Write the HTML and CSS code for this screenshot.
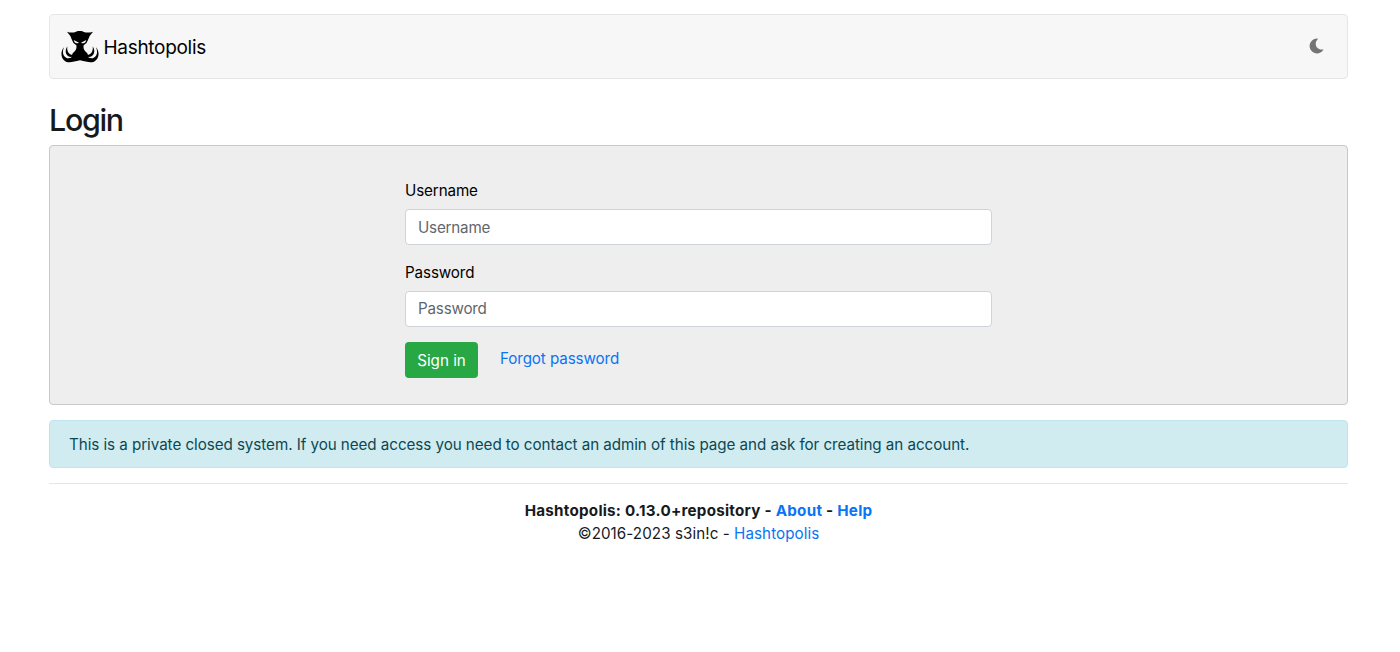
FILE: index.html
```html
<!DOCTYPE html>
<html lang="en">
<head>
<meta charset="utf-8">
<title>Hashtopolis</title>
<link rel="stylesheet" href="styles.css">
</head>
<body>
<div class="container">
  <nav class="navbar">
    <a class="brand" href="#">
      <svg class="logo" viewBox="9 13 114 96" aria-hidden="true">
        <path d="M27 15 Q42 20 54 15 Q65 10 76 15 Q88 20 105 15 Q94 26 90 40 Q87 51 77 56 C75 66 79 72 88 80 L92 92 Q88 103 66 98 Q44 103 40 92 L44 80 C53 72 57 66 55 56 Q45 51 42 40 Q38 26 27 15Z"/>
        <path d="M18 62 C6 76 8 97 24 105 C36 110 47 105 66 101 C85 105 96 110 108 105 C124 97 126 76 114 62 C121 78 116 91 106 94 C99 96 92 94 86 89 L46 89 C40 94 33 96 26 94 C16 91 11 78 18 62Z"/>
        <path d="M28 59 C18 74 24 91 40 91 L50 84 C37 89 25 77 28 59Z M104 59 C114 74 108 91 92 91 L82 84 C95 89 107 77 104 59Z"/>
        <path class="eyes" d="M47 40 L63 48 Q51 54 47 40Z M85 40 L69 48 Q81 54 85 40Z"/>
      </svg>
      <span>Hashtopolis</span>
    </a>
    <svg class="moon" viewBox="0 0 16 16" aria-hidden="true"><path d="M8.600 .1 A7.900 7.900 0 1 0 15.200 12.200 Q15.400 11.600 14.700 11.700 C8.300 12.700 4.600 5.500 9.200 1 Q9.900 .2 8.600 .1Z"/></svg>
  </nav>
  <h2>Login</h2>
  <main class="panel">
    <form class="login">
      <label for="username">Username</label>
      <input id="username" type="text" placeholder="Username">
      <label for="password">Password</label>
      <input id="password" type="password" placeholder="Password">
      <div class="actions">
        <button type="button">Sign in</button>
        <a href="#">Forgot password</a>
      </div>
    </form>
  </main>
  <div class="alert">This is a private closed system. If you need access you need to contact an admin of this page and ask for creating an account.</div>
  <footer>
    <div class="version">Hashtopolis: 0.13.0+repository - <a href="#">About</a> - <a href="#">Help</a></div>
    <div class="copyright">©2016-2023 s3in!c - <a href="#">Hashtopolis</a></div>
  </footer>
</div>
</body>
</html>
```
FILE: styles.css
```css
* { box-sizing: border-box; }
body {
  margin: 0;
  background: #fff;
  color: #161a1d;
  font-family: Inter, "Liberation Sans", sans-serif;
  font-size: 15.2px;
  line-height: 23px;
  letter-spacing: -0.055px;
}
a { color: #0a74f5; text-decoration: none; }
.container { width: 1299px; margin: 14px 0 0 49px; }
.navbar {
  display: flex;
  align-items: center;
  justify-content: space-between;
  height: 65px;
  padding: 0 23px 0 11px;
  background: #f7f7f7;
  border: 1px solid #e6e6e6;
  border-radius: 4px;
}
.brand {
  display: flex;
  align-items: center;
  gap: 4.5px;
  color: #000;
  font-size: 19px;
  line-height: 25px;
  letter-spacing: -0.3px;
}
.brand span { padding-top: 1px; }
.logo { width: 38px; height: 32px; }
.eyes { fill: #f7f7f7; }
.moon { width: 15px; height: 16px; margin-bottom: 1px; fill: #757575; }
h2 {
  margin: 23px 0 7px;
  font-size: 30.4px;
  line-height: 36px;
  font-weight: 500;
  letter-spacing: -1.3px;
}
.panel {
  height: 260px;
  padding: 33px 355px 0;
  background: #eee;
  border: 1px solid #c8c8c8;
  border-radius: 4px;
}
.login { display: flex; flex-direction: column; width: 587px; color: #000; }
label { height: 23px; margin-bottom: 7px; letter-spacing: -0.12px; }
input {
  height: 36px;
  margin: 0 0 15.5px;
  padding: 0 12px;
  background: #fff;
  border: 1px solid #ced4da;
  border-radius: 4px;
  font: inherit;
  letter-spacing: -0.2px;
}
input::placeholder { color: #5f676e; opacity: 1; }
.actions { display: flex; gap: 22px; }
button {
  width: 73px;
  height: 36px;
  padding: 0;
  background: #28a745;
  border: 0;
  border-radius: 4px;
  color: #fff;
  font: inherit;
}
.actions a { padding-top: 5px; letter-spacing: -0.1px; }
.alert {
  height: 48px;
  margin: 15px 0;
  padding: 12px 19px;
  background: #d1ecf1;
  border: 1px solid #bee5eb;
  border-radius: 4px;
  color: #0a4953;
}
footer { padding-top: 15px; border-top: 1px solid #e5e5e5; text-align: center; }
.version { font-weight: 700; letter-spacing: 0.25px; }
.copyright { letter-spacing: 0.06px; }
```
